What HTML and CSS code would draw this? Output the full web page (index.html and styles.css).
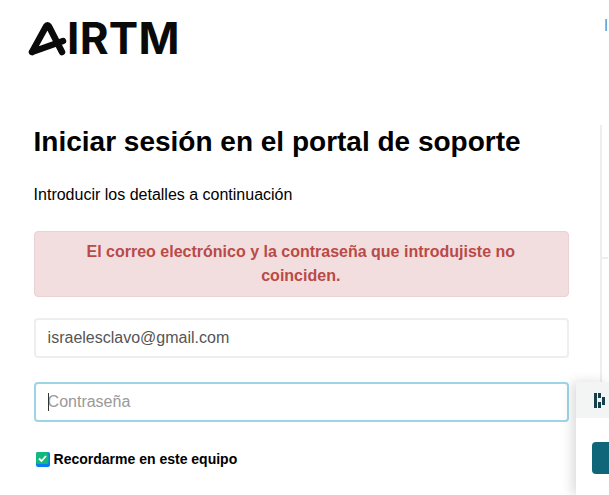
FILE: index.html
```html
<!DOCTYPE html>
<html lang="es">
<head>
    <meta charset="UTF-8">
    <meta name="viewport" content="width=device-width, initial-scale=1.0">
    <title>Iniciar sesión</title>
    <link rel="stylesheet" href="styles.css">
</head>
<body>

<header class="top">
    <a class="logo" href="#">
        <svg class="logo-mark" width="39" height="37" viewBox="0 0 39 37" aria-hidden="true">
            <path d="M4 32 L18 6.5 Q19.5 4 21 6.5 L34 32 M4 32 L35 21" fill="none" stroke="#0a0a0a" stroke-width="6.5" stroke-linecap="round" stroke-linejoin="round"/>
        </svg>
        <span class="logo-text">IRTM</span>
    </a>
    <span class="top-link"></span>
</header>

<div class="page">
    <main class="login">
        <h1>Iniciar sesión en el portal de soporte</h1>
        <p class="intro">Introducir los detalles a continuación</p>

        <div class="alert">El correo electrónico y la contraseña que introdujiste no coinciden.</div>

        <form>
            <input class="field" type="text" value="israelesclavo@gmail.com">
            <div class="field-wrap">
                <input class="field field-focus" type="password" placeholder="Contraseña">
                <span class="caret"></span>
            </div>
            <label class="remember">
                <svg class="check" width="14" height="15" viewBox="0 0 14 15" aria-hidden="true">
                    <rect x="0" y="0" width="14" height="15" rx="2" fill="#0a7cf0"/>
                    <rect x="0" y="0" width="12.5" height="12" rx="2" fill="#14b87c"/>
                    <path d="M3 6.5 L5.5 9 L10 4" fill="none" stroke="#fff" stroke-width="1.8"/>
                </svg>
                Recordarme en este equipo
            </label>
        </form>
    </main>

    <aside class="side">
        <div class="side-block"></div>
    </aside>
</div>

<div class="widget">
    <div class="widget-head">
        <svg width="11" height="15" viewBox="0 0 11 15" aria-hidden="true">
            <rect x="0" y="0" width="3" height="15" fill="#173f4b"/>
            <rect x="4" y="0" width="3" height="5" fill="#173f4b"/>
            <rect x="4" y="9" width="3" height="6" fill="#173f4b"/>
            <rect x="8" y="4" width="3" height="8" fill="#173f4b"/>
        </svg>
    </div>
    <div class="widget-body">
        <div class="widget-btn"></div>
    </div>
</div>

</body>
</html>
```

FILE: styles.css
```css
html, body {
    height: 100%;
    overflow: hidden;
}
body {
    font-family: 'Liberation Sans', Arial, sans-serif;
    background-color: #fff;
    color: #000;
    margin: 0;
    padding: 0;
}

/* Шапка */
.top {
    height: 125px;
    padding: 20px 2px 0 28px;
    box-sizing: border-box;
    display: flex;
    justify-content: space-between;
    align-items: flex-start;
}
.logo {
    display: flex;
    align-items: center;
    height: 37px;
    color: #0a0a0a;
    text-decoration: none;
}
.logo-mark {
    flex: none;
}
.logo-text {
    font-family: 'Inter', sans-serif;
    font-size: 44px;
    font-weight: 700;
    line-height: 37px;
    letter-spacing: 0.3px;
}
.top-link {
    width: 1px;
    height: 12px;
    margin-top: -1px;
    border-left: 1px solid #c8ad8c;
    background-color: #6aa9dc;
}

.page {
    display: flex;
    padding-left: 33.6px;
}
.login {
    width: 535.4px;
    flex: none;
}
.login h1 {
    margin: 0;
    font-size: 28px;
    line-height: 34px;
    font-weight: bold;
}
.intro {
    margin: 26px 0 0;
    font-size: 16px;
    line-height: 20px;
}

.alert {
    margin-top: 26px;
    padding: 8px 41px 8px 40px;
    border: 1px solid #ebd0d4;
    border-radius: 4px;
    background-color: #f2dede;
    color: #b94a48;
    font-size: 16px;
    font-weight: bold;
    line-height: 24px;
    text-align: center;
}

.field {
    display: block;
    width: 100%;
    height: 40px;
    box-sizing: border-box;
    padding: 0 12px;
    border: 2px solid #eeeeee;
    border-radius: 4px;
    outline: none;
    font-family: inherit;
    font-size: 16px;
    color: #555;
    margin-top: 21px;
}
.field-wrap {
    position: relative;
    margin-top: 24px;
}
.field-wrap .field {
    margin-top: 0;
}
.field-focus {
    border-color: #9dd5e6;
}
.field::placeholder {
    color: #999;
}
.caret {
    position: absolute;
    left: 14px;
    top: 11px;
    width: 1px;
    height: 18px;
    background-color: #333;
}

.remember {
    display: flex;
    align-items: center;
    gap: 4px;
    margin: 27px 0 0 2px;
    font-size: 14px;
    font-weight: bold;
    line-height: 20px;
}

/* Боковая колонка */
.side {
    margin-left: 31px;
    width: 8px;
    height: 370px;
    flex: none;
    box-sizing: border-box;
    border-left: 2px solid #eeeeee;
}
.side-block {
    height: 132px;
    border-bottom: 2px solid #eeeeee;
}

/* Всплывающий виджет */
.widget {
    position: fixed;
    left: 576px;
    right: 0;
    top: 382px;
    bottom: 0;
    background-color: #fff;
    box-shadow: -4px 0 12px rgba(0, 0, 0, 0.14);
}
.widget-head {
    height: 36px;
    box-sizing: border-box;
    padding: 11px 0 0 18px;
    background-color: #f3f5f5;
}
.widget-head svg {
    display: block;
}
.widget-body {
    padding: 24px 0 0 16px;
}
.widget-btn {
    height: 32px;
    border-radius: 4px 0 0 4px;
    background-color: #0f6678;
}
```
